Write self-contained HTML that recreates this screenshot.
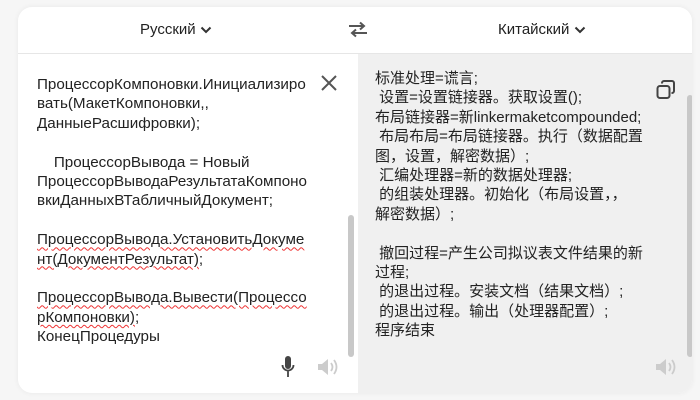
<!DOCTYPE html>
<html><head><meta charset="utf-8"><style>
body{margin:0;width:700px;height:400px;background:#f6f6f6;overflow:hidden;font-family:"Liberation Sans","Noto Sans CJK SC",sans-serif;color:#222}
.card{position:absolute;left:18px;top:7px;width:674px;height:386px;background:#fff;border-radius:14px;box-shadow:0 0 6px rgba(0,0,0,.06);overflow:hidden}
.hdr{position:absolute;left:0;top:0;width:674px;height:46px;border-bottom:1px solid #e6e6e6}
.lang{position:absolute;top:14px;font-size:15px;color:#222}
.right{position:absolute;left:340px;top:47px;width:334px;height:339px;background:#f0f0f0}
.txt{position:absolute;line-height:19.4px;white-space:pre}
.sq{text-decoration:underline wavy #e33;text-decoration-thickness:1px;text-underline-offset:2px}
.sb{position:absolute;background:#c8c8c8;border-radius:3px}
</style></head><body>
<div class="card">
<div class="hdr">
<div class="lang" style="left:122px">Русский <svg width="12" height="8" viewBox="0 0 12 8"><path d="M1.5 1.5L6 6L10.5 1.5" stroke="#333" stroke-width="2" fill="none"/></svg></div>
<svg style="position:absolute;left:330px;top:14px" width="20" height="18" viewBox="0 0 20 18"><path d="M1 5H16M12 1.5L16 5L12 8.5M19 12H4M8 8.5L4 12L8 15.5" stroke="#555" stroke-width="2" fill="none"/></svg>
<div class="lang" style="left:480px">Китайский <svg width="12" height="8" viewBox="0 0 12 8"><path d="M1.5 1.5L6 6L10.5 1.5" stroke="#333" stroke-width="2" fill="none"/></svg></div>
</div>
<div class="txt" style="left:19px;top:68px;font-size:15.2px">ПроцессорКомпоновки.Инициализиро
вать(МакетКомпоновки,,
ДанныеРасшифровки);

    ПроцессорВывода = Новый
ПроцессорВыводаРезультатаКомпоно
вкиДанныхВТабличныйДокумент;

<span class="sq">ПроцессорВывода.УстановитьДокуме</span>
<span class="sq">нт(ДокументРезультат)</span>;

<span class="sq">ПроцессорВывода.Вывести(Процессо</span>
<span class="sq">рКомпоновки)</span>;
КонецПроцедуры</div>
<svg style="position:absolute;left:302px;top:67px" width="18" height="18" viewBox="0 0 18 18"><path d="M2 2L16 16M16 2L2 16" stroke="#555" stroke-width="2"/></svg>
<div class="sb" style="left:330px;top:208px;width:6px;height:142px"></div>
<svg style="position:absolute;left:263px;top:348px" width="14" height="24" viewBox="0 0 14 24"><rect x="4" y="1" width="6" height="13" rx="3" fill="#444"/><path d="M1.5 10a5.5 5.5 0 0 0 11 0M7 16v6" stroke="#444" stroke-width="1.8" fill="none"/></svg>
<svg style="position:absolute;left:299px;top:350px" width="22" height="20" viewBox="0 0 22 20"><path d="M1 7h4l6-5v16l-6-5H1z" fill="#ccc"/><path d="M14 6q3 4 0 8M17 3q5 7 0 14" stroke="#ccc" stroke-width="1.8" fill="none"/></svg>
<div class="right">
<div class="txt" style="left:17px;top:15px;font-size:15px">标准处理=谎言;
 设置=设置链接器。获取设置();
布局链接器=新linkermaketcompounded;
 布局布局=布局链接器。执行（数据配置
图，设置，解密数据）;
 汇编处理器=新的数据处理器;
 的组装处理器。初始化（布局设置，，
解密数据）;

 撤回过程=产生公司拟议表文件结果的新
过程;
 的退出过程。安装文档（结果文档）;
 的退出过程。输出（处理器配置）;
程序结束</div>
<svg style="position:absolute;left:298px;top:26px" width="20" height="20" viewBox="0 0 20 20"><rect x="1.5" y="6" width="12" height="12" rx="2.5" stroke="#444" stroke-width="2" fill="none"/><path d="M6 3.5V3a2 2 0 0 1 2-2h8a2 2 0 0 1 2 2v8a2 2 0 0 1-2 2h-.5" stroke="#444" stroke-width="2" fill="none"/></svg>
<div class="sb" style="left:329px;top:41px;width:6px;height:262px"></div>
<svg style="position:absolute;left:297px;top:303px" width="22" height="20" viewBox="0 0 22 20"><path d="M1 7h4l6-5v16l-6-5H1z" fill="#ccc"/><path d="M14 6q3 4 0 8M17 3q5 7 0 14" stroke="#ccc" stroke-width="1.8" fill="none"/></svg>
</div>
</div>
</body></html>
